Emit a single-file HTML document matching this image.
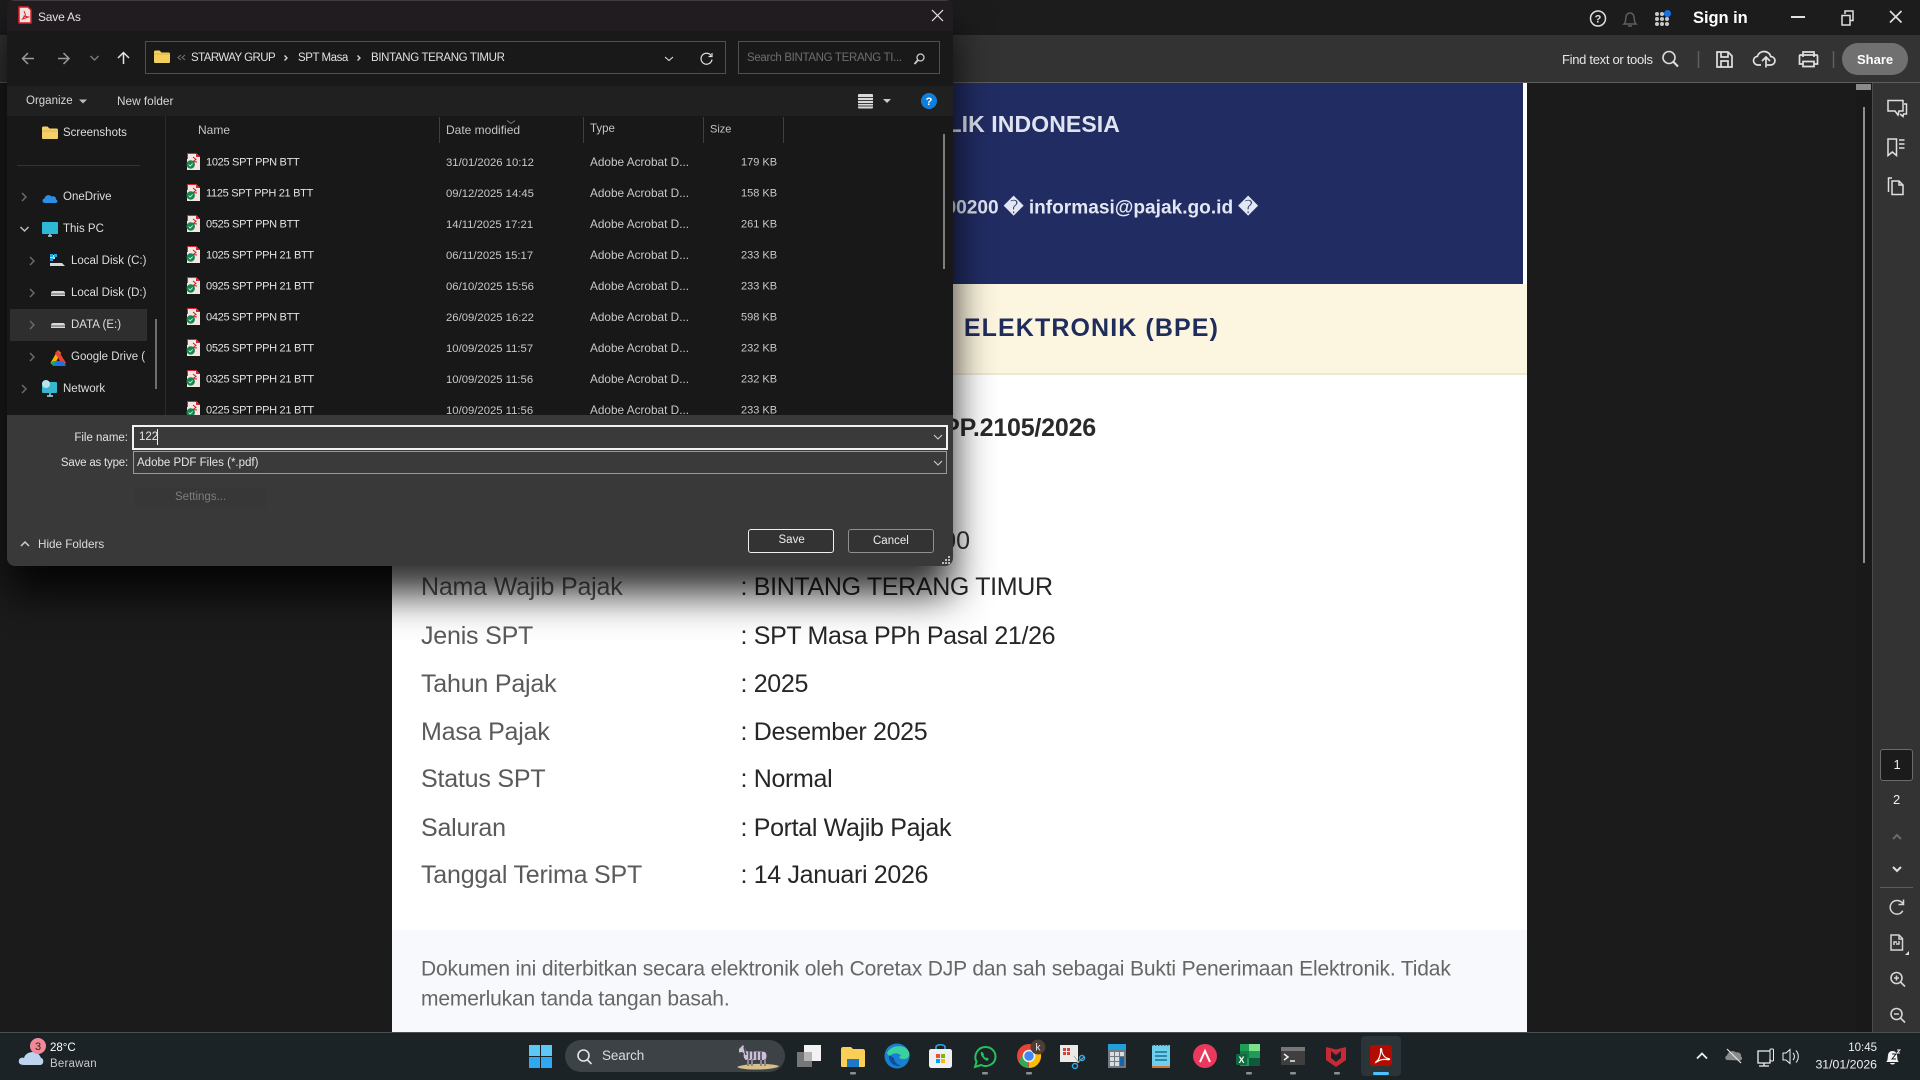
<!DOCTYPE html>
<html lang="en"><head><meta charset="utf-8"><title>Save As</title>
<style>
*{box-sizing:border-box}
html,body{margin:0;padding:0;width:1920px;height:1080px;overflow:hidden;background:#1b1b1b;font-family:"Liberation Sans",sans-serif}
.a{position:absolute}
.t{position:absolute;white-space:nowrap;transform:translateY(-50%);line-height:1.2}
svg{position:absolute;left:0;top:0;overflow:visible}
.lab{left:421px;font-size:25px;color:#5a5a5a;letter-spacing:-.2px}
.val{left:740.500px;font-size:25px;color:#262626;letter-spacing:-.33px}
.d{font-size:11px;color:#d4d4d4}
.n{left:206px;letter-spacing:-.3px;color:#e2e2e2}
.dt{left:446px;color:#c8c8c8;font-size:11.300px;margin-top:.5px}
.ty{left:590px;color:#c8c8c8;font-size:11.800px;margin-top:-1px}
.h{font-size:12px;color:#c4c4c4;top:129.500px}
.nav{font-size:11.500px;color:#dedede}
.tb{color:#fff}
</style></head><body>
<div class="a" style="left:0;top:0;width:1920px;height:35px;background:#1c1c1c"></div>
<div class="a" style="left:0;top:35px;width:1920px;height:47px;background:#333"></div>
<div class="a" style="left:0;top:82px;width:1920px;height:1px;background:#5e5e5e"></div>
<div class="a" style="left:1872px;top:83px;width:48px;height:949px;background:#333;border-left:1px solid #4b4b4b"></div>
<div class="a" style="left:1856px;top:83px;width:16px;height:949px;background:#191919"></div>
<div class="a" style="left:1856px;top:84px;width:15px;height:6px;background:#8a8a8a"></div>
<div class="a" style="left:1863px;top:107px;width:2px;height:456px;background:#8f8f8f"></div>

<div class="a" style="left:392px;top:83px;width:1135px;height:949px;background:#fff"></div>
<div class="a" style="left:392px;top:83px;width:1131px;height:201px;background:#212c63"></div>
<div class="a" style="left:392px;top:284px;width:1135px;height:91px;background:#fcf5df;border-bottom:2px solid #ece7d6"></div>
<div class="a" style="left:392px;top:930px;width:1135px;height:102px;background:#f8f9fc"></div>
<span class="t" style="right:800px;top:124.500px;font-size:23px;font-weight:700;color:#dfe4f0;letter-spacing:.1px">REPUBLIK INDONESIA</span>
<span class="t" style="right:662px;top:209px;font-size:19.100px;font-weight:700;color:#e3e7f2">1500200 � informasi@pajak.go.id �</span>
<span class="t" style="right:701px;top:328px;font-size:25px;font-weight:700;color:#1f2d5c;letter-spacing:1.1px">ELEKTRONIK (BPE)</span>
<span class="t" style="right:824px;top:428px;font-size:25px;font-weight:700;color:#2a2a2a;letter-spacing:-.2px">BPE-0000/CT/KPP.2105/2026</span>
<span class="t" style="right:950px;top:540.500px;font-size:25px;color:#333">0000000000</span>
<span class="t lab" style="top:587px">Nama Wajib Pajak</span><span class="t val" style="top:587px">: BINTANG TERANG TIMUR</span>
<span class="t lab" style="top:636px">Jenis SPT</span><span class="t val" style="top:636px">: SPT Masa PPh Pasal 21/26</span>
<span class="t lab" style="top:683.500px">Tahun Pajak</span><span class="t val" style="top:683.500px">: 2025</span>
<span class="t lab" style="top:732px">Masa Pajak</span><span class="t val" style="top:732px">: Desember 2025</span>
<span class="t lab" style="top:779px">Status SPT</span><span class="t val" style="top:779px">: Normal</span>
<span class="t lab" style="top:828px">Saluran</span><span class="t val" style="top:828px">: Portal Wajib Pajak</span>
<span class="t lab" style="top:875px">Tanggal Terima SPT</span><span class="t val" style="top:875px">: 14 Januari 2026</span>
<span class="t" style="left:421px;top:969px;font-size:21px;color:#666;letter-spacing:-.145px">Dokumen ini diterbitkan secara elektronik oleh Coretax DJP dan sah sebagai Bukti Penerimaan Elektronik. Tidak</span>
<span class="t" style="left:421px;top:999px;font-size:21px;color:#666;letter-spacing:-.145px">memerlukan tanda tangan basah.</span>

<!-- App chrome text -->
<span class="t" style="left:1693px;top:19px;font-size:16.500px;font-weight:700;color:#fff;letter-spacing:-.05px">Sign in</span>
<span class="t" style="left:1562px;top:59.500px;font-size:13px;color:#e6e6e6;letter-spacing:-.3px">Find text or tools</span>
<div class="a" style="left:1842px;top:43px;width:66px;height:32px;border-radius:16px;background:#707070"></div>
<span class="t" style="left:1857px;top:59.500px;font-size:13px;font-weight:700;color:#fff">Share</span>
<div class="a" style="left:1880px;top:749px;width:33px;height:32px;border-radius:3px;background:#1b1b1b;border:1px solid #6b6b6b"></div>
<span class="t" style="left:1893.500px;top:765px;font-size:13px;color:#eee">1</span>
<span class="t" style="left:1893px;top:800px;font-size:13px;color:#eee">2</span>
<div class="a" style="left:1880px;top:887px;width:33px;height:1px;background:#5e5e5e"></div>
<svg width="1920" height="1080" fill="none" stroke="#e0e0e0" stroke-width="1.500">
 <circle cx="1598" cy="18.500" r="7.500"/><text x="1598" y="22.500" font-size="11" font-weight="700" fill="#e0e0e0" stroke="none" text-anchor="middle" font-family="Liberation Sans">?</text>
 <path d="M1624 24c2-2 1.500-4 2-7 .5-3 2-4 4-4s3.500 1 4 4 0 5 2 7zM1628 26h4" stroke="#5e5e5e"/>
 <g fill="#c8c8c8" stroke="none"><circle cx="1657" cy="14" r="2"/><circle cx="1662" cy="14" r="2"/><circle cx="1657" cy="19" r="2"/><circle cx="1662" cy="19" r="2"/><circle cx="1667" cy="19" r="2"/><circle cx="1657" cy="24" r="2"/><circle cx="1662" cy="24" r="2"/><circle cx="1667" cy="24" r="2"/></g>
 <circle cx="1667.500" cy="13.500" r="3.500" fill="#1473e6" stroke="none"/>
 <path d="M1791 17h14" stroke-width="2"/>
 <path d="M1842 15.500h8v9.500h-8zM1845 14v-3h8v9.500h-2.500"/>
 <path d="M1890 11l11.500 11.500M1901.500 11L1890 22.500" stroke-width="1.600"/>
 <circle cx="1669" cy="57.500" r="6" stroke="#dcdcdc" stroke-width="1.600"/><path d="M1673.500 62l4.500 4.500" stroke-width="2"/>
 <path d="M1698.500 51v17M1833.500 51v17" stroke="#5e5e5e"/>
 <path d="M1717 52h11l4 4v11h-15zM1721 52v5h7v-5M1721 67v-6h7v6" stroke-width="1.700"/>
 <path d="M1761 65h-3c-2.800 0-4.500-2.300-4.500-4.500s1.700-4 4-4.200c.7-3 3.400-4.800 6.500-4.800 3.600 0 6.300 2.500 6.700 5 2.500.1 4.300 2 4.300 4.300 0 2.300-1.900 4.200-4.500 4.200h-3.500M1766 67.500v-10M1762 61l4-4 4 4" stroke-width="1.700"/>
 <path d="M1803 57v-5h11v5M1803 64h-3.500v-8c0-.6.500-1 1-1h16c.6 0 1 .4 1 1v8H1814M1803 61.500h11v5h-11z" stroke-width="1.700"/>
 <path d="M1888 100.500h15v10.500h-4l-1 4-3-4h-7zM1904 104h2.500v10h-3l-.5 2.500-3-2.500" stroke-width="1.500"/>
 <path d="M1888 139h8.500v16.500l-4.200-3.500-4.300 3.500zM1899 140h5.500M1899 144h5.500M1899 148h5.500" stroke-width="1.500"/>
 <path d="M1892 181h7l4 4v9.500h-11zM1899 181v4h4M1892 178h-3.500v14" stroke-width="1.500"/>
 <path d="M1893 839l4-4 4 4" stroke="#6a6a6a" stroke-width="2"/><path d="M1893 867l4 4 4-4" stroke-width="2"/>
 <path d="M1903 904c-1.200-2.300-3.500-3.500-6-3.500-3.800 0-6.800 3-6.800 6.800s3 6.800 6.800 6.800c2.600 0 4.600-1.300 5.800-3.400M1903.500 899.500v5h-5" stroke="#d4d4d4"/>
 <path d="M1891 935h8l3.500 3.500V950H1891zM1899 935v4h3.500M1894 945v-3h3M1899 941v3h-3" stroke="#d4d4d4"/><path d="M1909 955v-4l-4 4z" fill="#ddd" stroke="none"/>
 <circle cx="1896.500" cy="978" r="5.500" stroke="#d4d4d4" stroke-width="1.600"/><path d="M1900.500 982l4.500 4.500M1894 978h5M1896.500 975.500v5" stroke="#d4d4d4" stroke-width="1.600"/>
 <circle cx="1896.500" cy="1014" r="5.500" stroke="#d4d4d4" stroke-width="1.600"/><path d="M1900.500 1018l4.500 4.500M1894 1014h5" stroke="#d4d4d4" stroke-width="1.600"/>
</svg>

<!-- Dialog -->
<div class="a" style="left:7px;top:0;width:945.500px;height:566px;border-radius:8px;background:#393939;box-shadow:0 28px 40px rgba(0,0,0,.82);overflow:hidden">
 <div class="a" style="left:0;top:0;width:946px;height:31px;background:#201c1f;border-top:1px solid #3c3c3c"></div>
 <div class="a" style="left:0;top:31px;width:946px;height:55px;background:#191919"></div>
 <div class="a" style="left:0;top:86px;width:946px;height:30px;background:#202020"></div>
 <div class="a" style="left:0;top:116px;width:946px;height:299px;background:#181818"></div>
 <div class="a" style="left:158px;top:116px;width:1px;height:299px;background:#2a2a2a"></div>
 <div class="a" style="left:3px;top:309px;width:137px;height:32px;background:#2e2e2e"></div>
 <div class="a" style="left:10px;top:165px;width:123px;height:1px;background:#333"></div>
 <div class="a" style="left:148px;top:319px;width:2px;height:70px;background:#6f6f6f"></div>
 <div class="a" style="left:936px;top:134px;width:2px;height:135px;background:#7d7d7d"></div>
 <div class="a" style="left:138px;top:41px;width:581px;height:33px;border:1px solid #4f4f4f"></div>
 <div class="a" style="left:731px;top:41px;width:202px;height:33px;border:1px solid #4f4f4f"></div>
 <div class="a" style="left:126px;top:426px;width:814px;height:23px;border:1px solid #f2f2f2;background:#3a3a3a;outline:.3px solid #f2f2f2"></div>
 <div class="a" style="left:126px;top:451px;width:814px;height:23px;border:1px solid #9a9a9a;background:#3a3a3a"></div>
 <div class="a" style="left:128px;top:487px;width:131px;height:21px;background:#373737;border-radius:2px"></div>
 <div class="a" style="left:741px;top:529px;width:86px;height:24px;border:1.300px solid #f0f0f0;border-radius:3px;background:#333"></div>
 <div class="a" style="left:841px;top:529px;width:86px;height:24px;border:1px solid #909090;border-radius:3px;background:#333"></div>
</div>
<span class="t" style="left:38px;top:17px;font-size:12px;letter-spacing:-.2px;color:#e2e2e2">Save As</span>
<span class="t" style="left:191px;top:59px;font-size:11.500px;color:#e0e0e0;letter-spacing:-.55px">STARWAY GRUP</span>
<span class="t" style="left:298px;top:59px;font-size:11.500px;color:#e0e0e0;letter-spacing:-.45px">SPT Masa</span>
<span class="t" style="left:371px;top:59px;font-size:11.500px;color:#e0e0e0;letter-spacing:-.35px">BINTANG TERANG TIMUR</span>
<span class="t" style="left:747px;top:58.500px;font-size:11.500px;color:#6e6e6e;letter-spacing:-.33px">Search BINTANG TERANG TI...</span>
<span class="t" style="left:26px;top:102px;font-size:11.500px;color:#d6d6d6">Organize</span>
<span class="t" style="left:117px;top:101px;font-size:11.800px;color:#d6d6d6">New folder</span>
<span class="t h" style="left:198px">Name</span><span class="t h" style="left:446px">Date modified</span><span class="t h" style="left:590px;font-size:11.500px">Type</span><span class="t h" style="left:710px;font-size:11px">Size</span>
<div class="a" style="left:439px;top:117px;width:1px;height:26px;background:#3f3f3f"></div>
<div class="a" style="left:583px;top:117px;width:1px;height:26px;background:#3f3f3f"></div>
<div class="a" style="left:703px;top:117px;width:1px;height:26px;background:#3f3f3f"></div>
<div class="a" style="left:783px;top:117px;width:1px;height:26px;background:#3f3f3f"></div>

<div class="a" style="left:0;top:116px;width:953px;height:299px;overflow:hidden">
 <div class="a" style="left:0;top:-115px;width:953px;height:540px">
 <span class="t d n" style="top:162px">1025 SPT PPN BTT</span><span class="t d dt" style="top:162px">31/01/2026 10:12</span><span class="t d ty" style="top:162px">Adobe Acrobat D...</span><span class="t d" style="left:741px;top:162px;color:#c8c8c8">179 KB</span>
 <span class="t d n" style="top:193px">1125 SPT PPH 21 BTT</span><span class="t d dt" style="top:193px">09/12/2025 14:45</span><span class="t d ty" style="top:193px">Adobe Acrobat D...</span><span class="t d" style="left:741px;top:193px;color:#c8c8c8">158 KB</span>
 <span class="t d n" style="top:224px">0525 SPT PPN BTT</span><span class="t d dt" style="top:224px">14/11/2025 17:21</span><span class="t d ty" style="top:224px">Adobe Acrobat D...</span><span class="t d" style="left:741px;top:224px;color:#c8c8c8">261 KB</span>
 <span class="t d n" style="top:255px">1025 SPT PPH 21 BTT</span><span class="t d dt" style="top:255px">06/11/2025 15:17</span><span class="t d ty" style="top:255px">Adobe Acrobat D...</span><span class="t d" style="left:741px;top:255px;color:#c8c8c8">233 KB</span>
 <span class="t d n" style="top:286px">0925 SPT PPH 21 BTT</span><span class="t d dt" style="top:286px">06/10/2025 15:56</span><span class="t d ty" style="top:286px">Adobe Acrobat D...</span><span class="t d" style="left:741px;top:286px;color:#c8c8c8">233 KB</span>
 <span class="t d n" style="top:317px">0425 SPT PPN BTT</span><span class="t d dt" style="top:317px">26/09/2025 16:22</span><span class="t d ty" style="top:317px">Adobe Acrobat D...</span><span class="t d" style="left:741px;top:317px;color:#c8c8c8">598 KB</span>
 <span class="t d n" style="top:348px">0525 SPT PPH 21 BTT</span><span class="t d dt" style="top:348px">10/09/2025 11:57</span><span class="t d ty" style="top:348px">Adobe Acrobat D...</span><span class="t d" style="left:741px;top:348px;color:#c8c8c8">232 KB</span>
 <span class="t d n" style="top:379px">0325 SPT PPH 21 BTT</span><span class="t d dt" style="top:379px">10/09/2025 11:56</span><span class="t d ty" style="top:379px">Adobe Acrobat D...</span><span class="t d" style="left:741px;top:379px;color:#c8c8c8">232 KB</span>
 <span class="t d n" style="top:410px">0225 SPT PPH 21 BTT</span><span class="t d dt" style="top:410px">10/09/2025 11:56</span><span class="t d ty" style="top:410px">Adobe Acrobat D...</span><span class="t d" style="left:741px;top:410px;color:#c8c8c8">233 KB</span>
 <svg width="953" height="540" fill="none">
  <defs><g id="pdf"><path d="M-2-10h9l4 4v13h-13z" fill="#f5e6e6"/><path d="M7-10l4 4h-4z" fill="#d8262c"/><path d="M-2-10h9v1h-8v5h-1z" fill="#d8262c"/><path d="M4-6l3 2.500-3 2 4 .5" stroke="#c81e24" stroke-width="1"/><circle cx="1.700" cy="1.500" r="4.200" fill="#17864a"/><path d="M-.3 1.500l1.500 1.500 2.500-2.500" stroke="#dff" stroke-width=".8"/></g></defs>
  <use href="#pdf" x="189" y="162"/><use href="#pdf" x="189" y="193"/><use href="#pdf" x="189" y="224"/><use href="#pdf" x="189" y="255"/><use href="#pdf" x="189" y="286"/><use href="#pdf" x="189" y="317"/><use href="#pdf" x="189" y="348"/><use href="#pdf" x="189" y="379"/><use href="#pdf" x="189" y="410"/>
 </svg>
 </div>
</div>

<span class="t nav" style="left:63px;top:134px">Screenshots</span>
<span class="t nav" style="left:63px;top:197.500px">OneDrive</span>
<span class="t nav" style="left:63px;top:229.500px">This PC</span>
<span class="t nav" style="left:71px;top:261.500px">Local Disk (C:)</span>
<span class="t nav" style="left:71px;top:293.500px">Local Disk (D:)</span>
<span class="t nav" style="left:71px;top:325.500px">DATA (E:)</span>
<div class="a" style="left:71px;top:345px;width:75px;height:26px;overflow:hidden"><span class="t nav" style="left:0;top:13px">Google Drive (K:)</span></div>
<span class="t nav" style="left:63px;top:389.500px">Network</span>

<span class="t" style="right:1792px;top:439px;font-size:11.500px;color:#e2e2e2">File name:</span>
<span class="t" style="right:1792px;top:464px;font-size:11.500px;color:#e2e2e2;letter-spacing:-.2px">Save as type:</span>
<span class="t" style="left:139px;top:437.500px;font-size:11.500px;color:#e6e6e6">122</span>
<div class="a" style="left:157px;top:429px;width:1px;height:16px;background:#eee"></div>
<span class="t" style="left:137px;top:464px;font-size:11.500px;color:#e6e6e6">Adobe PDF Files (*.pdf)</span>
<span class="t" style="left:175px;top:498px;font-size:11.500px;color:#7d7d7d">Settings...</span>
<span class="t" style="left:38px;top:544.500px;font-size:11.700px;color:#dcdcdc">Hide Folders</span>
<span class="t" style="left:778.500px;top:541px;font-size:11.500px;color:#eee">Save</span>
<span class="t" style="left:873px;top:541.500px;font-size:11.500px;color:#eee">Cancel</span>

<svg width="1920" height="1080" fill="none">
 <path d="M19 7h9l3 3v13H19z" fill="#f0e0e0" stroke="#d81f26" stroke-width="1.500"/><path d="M24 11l1.500 4-3 4 6-2-5-1" stroke="#d81f26"/>
 <path d="M932 10l11 11M943 10l-11 11" stroke="#e8e8e8" stroke-width="1.200"/>
 <g stroke="#9a9a9a" stroke-width="1.500"><path d="M23 58.500h11M28 53l-5.500 5.500 5.500 5.500"/><path d="M69 58.500H58M63.500 53l5.500 5.500-5.500 5.500"/><path d="M90.500 56l4 4 4-4" stroke="#777"/></g>
 <path d="M123.500 64V53M118 58l5.500-5.500 5.500 5.500" stroke="#e4e4e4" stroke-width="1.500"/>
 <path d="M154 52c0-1 .5-1.500 1.500-1.500h4l2 2h7c1 0 1.500.5 1.500 1.500v8c0 .5-.5 1-1 1h-14c-.5 0-1-.5-1-1z" fill="#f3cf5c"/><path d="M154 54h16" stroke="#e6b53e"/>
 <path d="M181 55l-3 2.500 3 2.500M185 55l-3 2.500 3 2.500" stroke="#777"/>
 <path d="M284.500 55.500l2.500 2.500-2.500 2.500M357.500 55.500l2.500 2.500-2.500 2.500" stroke="#ddd" stroke-width="1.300"/>
 <path d="M665 57l4 3.500 4-3.500" stroke="#ddd" stroke-width="1.100"/>
 <path d="M711 55.500a5.500 5.500 0 1 0 1 4M712 53v3.500h-3.500" stroke="#ddd" stroke-width="1.200"/>
 <circle cx="920.500" cy="57.500" r="3.500" stroke="#ccc" stroke-width="1.300"/><path d="M918 60l-3.500 4" stroke="#ccc" stroke-width="1.800"/>
 <path d="M79 99.500h8l-4 4z" fill="#bbb"/>
 <rect x="858" y="94" width="15" height="14.500" rx="1" fill="#d8d8d8"/><path d="M858 97.500h15M858 100.500h15M858 103.500h15M858 106h15" stroke="#3a3a3a" stroke-width=".9"/>
 <path d="M883 99h8l-4 4z" fill="#ccc"/>
 <circle cx="929" cy="101" r="8" fill="#0f7fdc"/><text x="929" y="105" font-size="11" font-weight="700" fill="#fff" text-anchor="middle" font-family="Liberation Sans">?</text>
 <path d="M507 120.500l4 3 4-3" stroke="#777"/>
 <path d="M42 128c0-1 .5-1.500 1.500-1.500h4l2 2h7c1 0 1.500.5 1.500 1.500v8c0 .5-.5 1-1 1H43c-.5 0-1-.5-1-1z" fill="#f4d06a"/><path d="M42 131h16" stroke="#e3b548"/>
 <g stroke="#6a6a6a" stroke-width="1.500"><path d="M22 193l4 4-4 4M30 257l4 4-4 4M30 289l4 4-4 4M30 321l4 4-4 4M30 353l4 4-4 4M22 385l4 4-4 4"/><path d="M20.500 227l4 4 4-4" stroke="#bbb"/></g>
 <path d="M45 203c-3 0-3.500-4-.5-4.500.5-3.500 5-4.500 7-2 3-1 5 1 4.500 3 2 .5 2 3.500-.5 3.500z" fill="#2a8fe5"/>
 <rect x="42" y="222" width="16" height="12" rx="1" fill="#2fb8d6"/><path d="M48 236h4M50 234v2" stroke="#a8d8e8" stroke-width="1.400"/>
 <path d="M50 255h5v4h-5zM58 263l4 0 3 3H50v-3z" fill="#d4d8dc"/><rect x="50" y="254" width="3" height="3" fill="#2aa4e0"/><rect x="54" y="254" width="3" height="3" fill="#2aa4e0"/><rect x="50" y="258" width="3" height="3" fill="#2aa4e0"/>
 <path d="M51 296v-3c0-1 1-2 2-2h10c1 0 2 1 2 2v3z" fill="#d9d9d9"/><path d="M51 294h14" stroke="#555"/>
 <path d="M51 328v-3c0-1 1-2 2-2h10c1 0 2 1 2 2v3z" fill="#d9d9d9"/><path d="M51 326h14" stroke="#555"/>
 <path d="M58 350l-7.500 13 3 3 7.500-13z" fill="#f6b704"/><path d="M58 350l8 13-3 3-8-13z" fill="#ea4335"/><path d="M53 366h13l-3-5H56z" fill="#1a73e8"/><path d="M50.500 363l3 3 3-5h-3z" fill="#1da462"/>
 <rect x="42" y="382" width="15" height="11" rx="1" fill="#36b6cf"/><circle cx="46" cy="384" r="4" fill="#b8e4f0"/><path d="M47 396h6M50 393v3" stroke="#a8d8e8" stroke-width="1.400"/>
 <path d="M941 434l4 4 4-4M941 460l4 4 4-4" stroke="#cfcfcf" stroke-width="1.100" transform="translate(-7 1)"/>
 <path d="M21 546l4-4 4 4" stroke="#cfcfcf" stroke-width="1.500"/>
 <g fill="#bbb"><rect x="948" y="556" width="2" height="2"/><rect x="945" y="559" width="2" height="2"/><rect x="948" y="559" width="2" height="2"/><rect x="942" y="562" width="2" height="2"/><rect x="945" y="562" width="2" height="2"/><rect x="948" y="562" width="2" height="2"/></g>
</svg>

<!-- Taskbar -->
<div class="a" style="left:0;top:1032px;width:1920px;height:48px;background:#1c2327;border-top:1px solid #4a4f52"></div>
<div class="a" style="left:1361px;top:1036px;width:40px;height:40px;background:#2a3439;border-radius:4px"></div>
<div class="a" style="left:565px;top:1040px;width:220px;height:32px;background:#3c4246;border-radius:16px"></div>
<span class="t tb" style="left:50px;top:1048.500px;font-size:11.500px">28°C</span>
<span class="t" style="left:50px;top:1065px;font-size:11.500px;color:#c9c9c9;letter-spacing:.2px">Berawan</span>
<span class="t" style="left:602px;top:1056px;font-size:13.500px;color:#dcdcdc;letter-spacing:-.1px">Search</span>
<span class="t" style="right:43px;top:1049px;font-size:11.500px;color:#f0f0f0">10:45</span>
<span class="t" style="right:43px;top:1065px;font-size:12.300px;color:#f0f0f0">31/01/2026</span>
<svg width="1920" height="1080" fill="none">
 <path d="M24 1065c-4 0-6-2-5-5 .5-2 3-3 5-2 1-4 5-6 9-6s7 3 8 6c3 0 3.500 7-1 7z" fill="#bcd4ee"/>
 <circle cx="38" cy="1046" r="8" fill="#f08a96"/><text x="38" y="1050" font-size="11" text-anchor="middle" fill="#3a1a1e" font-family="Liberation Sans">3</text>
 <g fill="#5cc8f5"><rect x="529" y="1045" width="11" height="11"/><rect x="541" y="1045" width="11" height="11"/><rect x="529" y="1057" width="11" height="11" fill="#2fa8ef"/><rect x="541" y="1057" width="11" height="11" fill="#2fa8ef"/></g>
 <circle cx="583.500" cy="1055.500" r="5.500" stroke="#e4e4e4" stroke-width="1.600"/><path d="M587.500 1060l4 4" stroke="#e4e4e4" stroke-width="1.600"/>
 <path d="M737 1067c8-4 34-4 42-1-3 4-36 5-42 1z" fill="#d8c08a"/>
 <path d="M745 1051c6 1 14 0 20 1 2 2 2 6 0 8h-19c-3-2-3-6-1-9z" fill="#c9c2d2"/>
 <path d="M739 1049l4-4 3 5-1 4-3-2-3 .5z" fill="#c9c2d2"/>
 <path d="M748 1059v7M752 1059v7M761 1059v7M765 1059v7" stroke="#8d8296" stroke-width="2"/>
 <path d="M744 1047l2 8M749 1051v8M753 1051v8M757 1052v8M761 1052v8M741 1046l2-3" stroke="#4a3f5a" stroke-width="1.500"/>
 <rect x="797" y="1052" width="15" height="15" fill="#777"/><rect x="804" y="1045" width="17" height="16" fill="#f2f2f2"/><rect x="804" y="1052" width="8" height="9" fill="#b5b5b5"/>
 <path d="M841 1049c0-1 1-2 2-2h8l2 2h10c1 0 2 1 2 2v15c0 1-1 1-2 1h-20c-1 0-2 0-2-1z" fill="#f9cf58"/><rect x="847" y="1059" width="12" height="8" fill="#1e78c8"/>
 <circle cx="897" cy="1056" r="12.500" fill="#1a7fd0"/><path d="M887 1053c3-8 18-10 22-1 2 5-3 8-7 7-4-1-3-3-1-3-1-3-8-4-11 0-1 1-2-1-3-3z" fill="#3bd0a0"/><path d="M889 1055c-1 7 5 12 12 11-5-2-7-5-7-8z" fill="#0c4f9c"/>
 <path d="M931 1049h19c1 0 2 1 2 2v14c0 2-1 3-3 3h-17c-2 0-3-1-3-3v-14c0-1 1-2 2-2z" fill="#eef0f2"/><path d="M936 1049v-2c0-3 9-3 9 0v2" stroke="#2aa8e0" stroke-width="1.600"/>
 <rect x="936" y="1054" width="4" height="4" fill="#f25022"/><rect x="941" y="1054" width="4" height="4" fill="#7fba00"/><rect x="936" y="1059" width="4" height="4" fill="#00a4ef"/><rect x="941" y="1059" width="4" height="4" fill="#ffb900"/>
 <g transform="translate(-1 -1)"><path d="M976 1068l1.500-5c-3.500-7 1.500-15 9-15 5.800 0 10 4.400 10 9.500 0 7.500-8 11.500-14.500 8.500z" stroke="#22c35e" stroke-width="2"/><path d="M982 1053c-1 3 2 7 6 9l2-2-2-1.500-1 .5c-1-.5-2-1.500-2.500-2.500l.5-1-1.500-2.500z" fill="#22c35e"/></g>
 <circle cx="1029" cy="1056" r="12" fill="#e94335"/><path d="M1029 1068a12 12 0 0 0 10.400-18h-10z" fill="#fbbc05"/><path d="M1029 1068a12 12 0 0 1-10.400-6l5.400-9.500z" fill="#34a853"/><circle cx="1029" cy="1056" r="5.500" fill="#4285f4" stroke="#eee" stroke-width="1.600"/>
 <circle cx="1038" cy="1047" r="7.500" fill="#4f3c36"/><text x="1038" y="1050.500" font-size="10" text-anchor="middle" fill="#eee" font-family="Liberation Sans">k</text>
 <g transform="translate(-1 0)"><rect x="1061" y="1045" width="18" height="17" fill="#eceae6"/><g fill="#d8413a"><rect x="1064" y="1048" width="3" height="3"/><rect x="1068" y="1048" width="3" height="3"/><rect x="1064" y="1052" width="3" height="3"/><rect x="1068" y="1052" width="3" height="3"/></g><path d="M1075 1056l5 7M1085 1057l-7 6" stroke="#aaa"/><circle cx="1076" cy="1066" r="2.500" stroke="#2aa8e0" stroke-width="1.500"/><circle cx="1083" cy="1058" r="2.500" stroke="#2aa8e0" stroke-width="1.500"/></g>
 <rect x="1108" y="1044" width="18" height="24" fill="#707a86"/><rect x="1108" y="1044" width="18" height="6" fill="#1fa0d8"/><g fill="#dcdcdc"><rect x="1110" y="1052" width="4" height="4"/><rect x="1115" y="1052" width="4" height="4"/><rect x="1120" y="1052" width="4" height="4"/><rect x="1110" y="1057" width="4" height="4"/><rect x="1115" y="1057" width="4" height="4"/><rect x="1110" y="1062" width="4" height="4"/><rect x="1115" y="1062" width="4" height="4"/></g><rect x="1120" y="1057" width="4" height="9" fill="#1866a8"/>
 <rect x="1152" y="1045" width="18" height="22" fill="#6fd0ee"/><rect x="1152" y="1066" width="18" height="2" fill="#d4732c"/><path d="M1155 1052h12M1155 1056h12M1155 1060h12" stroke="#1d6f94" stroke-width="1.500"/><path d="M1152 1045h18" stroke="#1d3a48" stroke-width="1.500" stroke-dasharray="1.500 1.500"/>
 <circle cx="1205" cy="1056" r="12" fill="#e93a5e"/><path d="M1200 1062l5-11 5 11" stroke="#fff" stroke-width="2"/>
 <g transform="translate(-1 -1)"><path d="M1241 1045h19c.6 0 1 .4 1 1v20c0 .6-.4 1-1 1h-19z" fill="#1f9d58"/><rect x="1250" y="1045" width="11" height="7" fill="#7ee08c"/><rect x="1241" y="1052" width="9" height="7" fill="#1a7a46"/><rect x="1250" y="1059" width="11" height="8" fill="#10593a"/><rect x="1237" y="1055" width="11" height="11" rx="1.500" fill="#0f6b3f"/><text x="1242.500" y="1064" font-size="9" font-weight="700" text-anchor="middle" fill="#fff" font-family="Liberation Sans">X</text></g>
 <rect x="1281" y="1047" width="24" height="18" rx="1" fill="#3f3f3f"/><rect x="1281" y="1047" width="24" height="4" fill="#777"/><path d="M1284 1054l4 3-4 3M1290 1061h5" stroke="#eee" stroke-width="1.500"/>
 <path d="M1326 1047l10 2.500 10-2.500v13l-10 7-10-7z" fill="#c72a35"/><path d="M1331 1051l5 4 5-4v7l-5 4-5-4z" fill="#1c2327"/>
 <rect x="1370" y="1045" width="22" height="21" rx="3" fill="#b30b00"/><path d="M1376 1062c3-2 5-8 4.500-12-.2-2 1.200-1.800 1.200 0 0 4 3 8 6.500 8.500 2 .3 1.700 1.500 0 1.200-4-.7-8-.2-11 2-1 .8-1.700.300-.7-.7z" stroke="#fff" stroke-width="1.200"/>
 <g fill="#8a8f92"><rect x="850" y="1072" width="6" height="2.500" rx="1"/><rect x="982" y="1072" width="6" height="2.500" rx="1"/><rect x="1026" y="1072" width="6" height="2.500" rx="1"/><rect x="1246" y="1072" width="6" height="2.500" rx="1"/><rect x="1290" y="1072" width="6" height="2.500" rx="1"/><rect x="1334" y="1072" width="6" height="2.500" rx="1"/></g>
 <rect x="1373" y="1072" width="16" height="3" rx="1.500" fill="#4cc2ff"/>
 <path d="M1697 1058.500l5-5 5 5" stroke="#f0f0f0" stroke-width="1.800"/>
 <path d="M1727 1060c-2 0-2.500-4 0-4.500 1-4 6-6 9-3 3-1 6 2 5 4 2 1 1 4-1 4z" fill="#8a8a8a"/><path d="M1727 1049l14 14" stroke="#e4e4e4" stroke-width="1.200"/>
 <path d="M1770 1051h-12v12h12v-4M1764 1063v3M1759 1066h10" stroke="#f0f0f0" stroke-width="1.300"/><rect x="1770" y="1049" width="3.500" height="12" rx="1" stroke="#f0f0f0"/>
 <path d="M1783 1053h3l4-3.500v14l-4-3.500h-3zM1793 1053a5 5 0 0 1 0 7M1796 1050.500a9 9 0 0 1 0 12" stroke="#f0f0f0"/>
 <path d="M1886 1062c2-1 1.500-4 2-7 .4-2.500 2-4 4.500-4s4 1.500 4.500 4 0 6 2 7zM1890 1063c.5 2 4.500 2 5 0" fill="#f4f4f4"/><path d="M1892 1054h4l-4 5h4" stroke="#1c2327" stroke-width="1"/><path d="M1897 1050h3l-3 3h3" stroke="#f4f4f4" stroke-width=".9"/>
</svg>
</body></html>
